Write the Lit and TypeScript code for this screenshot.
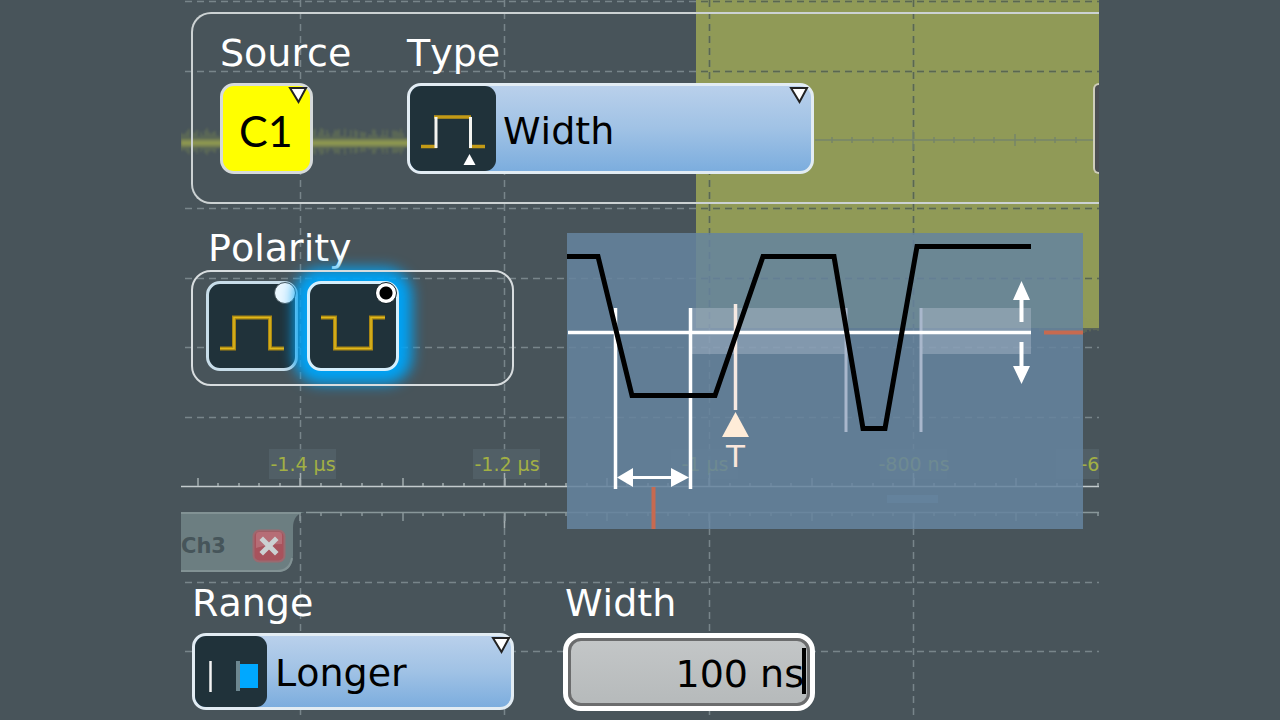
import { LitElement, html, svg, css } from "lit";
import { customElement, state } from "lit/decorators.js";

const verticals = [301, 505, 710, 914];
const horizontals = [1, 71, 208, 278, 347, 417, 582, 651];
const timeLabels = [
  { x: 303, text: "-1.4 µs" },
  { x: 507, text: "-1.2 µs" },
  { x: 705, text: "-1 µs" },
  { x: 914, text: "-800 ns" },
  { x: 1090, text: "-6" },
];

/* Deterministic noise trace around the channel baseline. */
function noise(from: number, to: number, mid: number, amp: number): string {
  let d = "";
  let seed = 7;
  for (let x = from; x < to; x += 2) {
    seed = (seed * 73 + 41) % 997;
    const h = 4 + (seed / 997) * amp;
    d += `M${x} ${mid - h}V${mid + h * 0.8}`;
  }
  return d;
}

/* Ruler ticks: minor every fifth of a major, drawn up or down from the line. */
function ticks(y: number, dir: number): string {
  let d = "";
  for (let i = 0; i < 46; i++) {
    const x = 198 + Math.round(i * 20.45);
    d += `M${x} ${y}v${dir * (i % 5 === 0 ? 8 : 3)}`;
  }
  return d;
}

function axisTicks(): string {
  let d = "";
  for (let i = 0; i < 14; i++) {
    const h = i === 4 ? 10 : i === 9 ? 6 : 3;
    d += `M${832 + Math.round(i * 20.3)} ${140 - h}v${h * 2}`;
  }
  return d;
}

@customElement("scope-backdrop")
export class ScopeBackdrop extends LitElement {
  static styles = css`
    :host { display: block; overflow: hidden; }
    .grid { display: block; width: 100%; height: 100%; }
    .time { font: 19px "DejaVu Sans", Verdana, sans-serif; fill: #a2b044; text-anchor: middle; }
  `;

  render() {
    return html`<svg class="grid" viewBox="181 0 918 720" preserveAspectRatio="xMinYMin slice" aria-hidden="true">
      <defs>
        <clipPath id="lit"><path d="M696 0H1099V328H696Z" /></clipPath>
        <filter id="soft" x="-5%" y="-50%" width="110%" height="200%"><feGaussianBlur stdDeviation="0.9" /></filter>
      </defs>
      <path d="M696 0H1099V328H696Z" fill="#909a57" />
      <path d=${noise(1040, 1099, 326, 5)} stroke="#909a57" stroke-opacity=".5" />
      <g filter="url(#soft)">
        <path d=${noise(181, 697, 143, 11)} stroke="#8d9850" stroke-opacity=".4" stroke-width="1.4" />
        <path d="M181 143H697" stroke="#8d9850" stroke-width="8" stroke-opacity=".6" />
        <path d="M181 143H697" stroke="#a5ae50" stroke-width="3" stroke-opacity=".5" />
      </g>
      <g stroke="#78858a" stroke-width="1.5" stroke-dasharray="7 5" fill="none">
        ${horizontals.map((y) => svg`<path d="M185 ${y + 0.5}H1099" />`)}
        ${verticals.map((x) => svg`<path d="M${x - 0.5} 0V486M${x - 0.5} 516V720" />`)}
      </g>
      <g clip-path="url(#lit)" stroke="#5a674f" stroke-width="1.5" stroke-dasharray="7 5" fill="none">
        ${horizontals.map((y) => svg`<path d="M185 ${y + 0.5}H1099" />`)}
        ${verticals.map((x) => svg`<path d="M${x - 0.5} 0V486" />`)}
      </g>
      <path d="M815 140H1094" stroke="#76856a" stroke-width="1.5" />
      <path d=${axisTicks()} stroke="#76856a" stroke-width="1.5" />
      ${timeLabels.map((t) => svg`
        <rect x=${t.x - 34} y="449" width="67" height="30" fill="#536269" fill-opacity=".85" />
        <text class="time" x=${t.x} y="471">${t.text}</text>`)}
      <path d="M181 486.500H1099" stroke="#c3cbcd" stroke-width="1.6" />
      <path d=${ticks(486, -1)} stroke="#a3adb0" stroke-width="1.5" />
      <path d="M300.500 473V486M504.500 473V486M709.500 473V486M913.500 473V486M504.500 513V528M709.500 513V528M913.500 513V528" stroke="#a3adb0" stroke-width="1.5" />
      <path d="M306 512.500H1099" stroke="#89979a" stroke-width="1.5" />
      <path d=${ticks(513, 1)} stroke="#89979a" stroke-width="1.5" />
      <rect x="887" y="495" width="51" height="8" fill="#6e8fae" fill-opacity=".6" />
    </svg>`;
  }
}

const arrow = html`<svg class="arrow" width="20" height="20" viewBox="0 0 20 20" aria-hidden="true">
  <path d="M2 3H18L10.500 17Z" fill="#fff" stroke="#222" stroke-width="2" /></svg>`;

@customElement("app-root")
export class AppRoot extends LitElement {
  @state() private polarity = "negative";

  static styles = css`
    :host {
      display: block;
      min-height: 100vh;
      background: #48545a;
      color: #fff;
      font: 38px/44px "DejaVu Sans", Verdana, sans-serif;
      font-kerning: none;
    }
    * { box-sizing: border-box; }
    .stage {
      position: relative;
      isolation: isolate;
      max-width: 918px;
      min-height: 100vh;
      margin: 0 auto;
      overflow: hidden;
    }
    .backdrop { position: absolute; inset: 0; z-index: -1; }
    .head {
      display: flex;
      gap: 94px;
      margin: 12px 0 0 10px;
      padding: 17px 0 28px 27px;
      border: 2px solid #ccd2d3;
      border-right: 0;
      border-radius: 20px 0 0 20px;
    }
    .field { display: flex; flex-direction: column; gap: 8px; }
    .name { display: block; height: 44px; white-space: nowrap; }
    .source { width: 93px; }
    .type { flex: 0 1 407px; }
    .more { margin-left: auto; align-self: flex-end; }
    .edge {
      display: block;
      width: 6px;
      height: 91px;
      padding: 0;
      border: 2px solid #cfcdbb;
      border-right: 0;
      border-radius: 12px 0 0 12px;
      background: #4b4d52;
    }
    .drop { display: grid; align-items: center; }
    .drop > * { grid-area: 1 / 1; }
    .pick {
      appearance: none;
      width: 100%;
      height: 91px;
      margin: 0;
      padding: 5px 0 0 93px;
      border: 3px solid #e2ecf3;
      border-radius: 14px;
      background: linear-gradient(#b9d0eb, #a0c2e5 50%, #7cadde);
      color: #000;
      font: inherit;
      outline: 0;
    }
    .short .pick { height: 77px; padding: 3px 0 0 80px; }
    .channel {
      padding: 4px 0 0 16px;
      border-color: #d6dadb;
      background: #ffff00;
      font: 43px/52px Lato, "Open Sans", sans-serif;
    }
    .icon { z-index: 1; margin-left: 3px; border-radius: 11px; background: #20323a; pointer-events: none; }
    .arrow { z-index: 1; align-self: start; justify-self: end; margin: 2px 5px 0 0; pointer-events: none; }
    .short .arrow { margin-right: 3px; }
    .middle { display: flex; align-items: flex-start; margin-bottom: 8px; }
    .left { flex: 0 0 386px; padding-top: 22px; }
    .legend { padding-left: 27px; }
    .group {
      position: relative;
      display: flex;
      gap: 9px;
      width: 323px;
      height: 116px;
      margin-left: 10px;
      padding: 11px 0 0 15px;
    }
    .group::after {
      content: "";
      position: absolute;
      z-index: 2;
      inset: 0;
      border: 2px solid #d8dddf;
      border-radius: 20px;
      pointer-events: none;
    }
    .choice { position: relative; width: 92px; height: 90px; border: 3px solid #c8dde9; border-radius: 14px; background: #20323a; }
    .choice svg { display: block; width: 100%; height: 100%; }
    .on { z-index: 1; border-color: #d5effc; box-shadow: 0 0 14px 13px #00a3f5; }
    .dot {
      appearance: none;
      position: absolute;
      top: -2px;
      right: -1px;
      width: 22px;
      height: 22px;
      margin: 0;
      border: 1px solid #46555c;
      border-radius: 50%;
      background: #eaf7ff;
      outline: 0;
    }
    .dot:checked { border-color: #16242a; background: radial-gradient(circle, #000 6px, #fff 7px); }
    .tab {
      position: relative;
      display: flex;
      align-items: center;
      justify-content: space-between;
      width: 124px;
      height: 61px;
      margin-top: 126px;
      padding: 6px 19px 0 0;
      color: #46555a;
      font: bold 21px/30px "DejaVu Sans", Verdana, sans-serif;
    }
    .shape { position: absolute; inset: 0; z-index: -1; }
    .close { width: 34px; height: 34px; padding: 0; border: 0; background: none; }
    .close svg { display: block; }
    .diagram { flex: 1 1 516px; min-width: 0; margin: 29px 16px 0 0; }
    .diagram svg { display: block; width: 100%; }
    .mark { font: 31px "DejaVu Sans", Verdana, sans-serif; fill: #fae6db; text-anchor: middle; }
    .foot { display: flex; gap: 49px; padding: 0 0 8px 11px; }
    .range { width: 322px; }
    .width { width: 252px; }
    .width .name { padding-left: 2px; }
    .entry { position: relative; height: 78px; border: 5px solid #fff; border-radius: 18px; background: #bbbebf; }
    .value {
      display: block;
      width: 100%;
      height: 68px;
      padding: 4px 3px 0 0;
      border: 3px solid #6b6c6d;
      border-radius: 13px;
      background: linear-gradient(#c3c6c7, #b6babb);
      color: #000;
      font: inherit;
      text-align: right;
      outline: 0;
    }
    .caret { position: absolute; top: 10px; right: 4px; width: 4px; height: 46px; background: #000; }
  `;

  private choose(value: string) {
    this.polarity = value;
  }

  private choice(value: string, label: string, d: string) {
    const on = this.polarity === value;
    return html`<label class=${on ? "choice on" : "choice"}>
      <svg viewBox="0 0 86 84" aria-hidden="true"><path d=${d} fill="none" stroke="#a88612" stroke-width="4" />
        <path d=${d} fill="none" stroke="#e0b81c" stroke-width="1.500" /></svg>
      <input class="dot" type="radio" name="polarity" aria-label=${label} .checked=${on} @change=${() => this.choose(value)} />
    </label>`;
  }

  render() {
    return html`<main class="stage">
      <scope-backdrop class="backdrop"></scope-backdrop>
      <section class="head">
        <div class="field source">
          <label class="name" for="source">Source</label>
          <div class="drop">
            <select class="pick channel" id="source"><option>C1</option></select>
            ${arrow}
          </div>
        </div>
        <div class="field type">
          <label class="name" for="type">Type</label>
          <div class="drop">
            <svg class="icon" width="86" height="85" viewBox="0 0 86 85" aria-hidden="true">
              <path d="M11 60.500H27M24 31H61M59 60.500H75" stroke="#c39a16" stroke-width="3.500" />
              <path d="M26 31V62M60.500 31V62" stroke="#f4f4f0" stroke-width="3" />
              <path d="M59.500 68L65.500 79H53.500Z" fill="#fff" />
            </svg>
            <select class="pick" id="type"><option>Width</option></select>
            ${arrow}
          </div>
        </div>
        <div class="more"><button class="edge" aria-label="More"></button></div>
      </section>

      <section class="middle">
        <div class="left">
          <div class="name legend" id="polarity">Polarity</div>
          <div class="group" role="radiogroup" aria-labelledby="polarity">
            ${this.choice("positive", "Positive", "M11 64.500H25V33.500H61V64.500H75")}
            ${this.choice("negative", "Negative", "M11 33.500H25V64.500H61V33.500H75")}
          </div>
          <div class="tab">
            <svg class="shape" width="124" height="61" viewBox="0 0 124 61" aria-hidden="true">
              <path d="M0 0H124Q112 2 112 16V44Q111 60 96 60H0Z" fill="#6c7e81" />
              <path d="M0 1H120M111 46Q109 59 96 59H0" fill="none" stroke="#829294" stroke-width="2" />
            </svg>
            <span>Ch3</span>
            <button class="close" aria-label="Close Ch3">
              <svg width="34" height="34" viewBox="0 0 34 34">
                <rect x="1.500" y="1.500" width="31" height="31" rx="6" fill="#a8525c" stroke="#9a6a70" stroke-width="2" />
                <path d="M7 3H27Q30 3 30 6V15Q17 15 4 19V6Q4 3 7 3Z" fill="#bf8087" fill-opacity=".6" />
                <path d="M11 11L23 23M23 11L11 23" stroke="#cbd0d2" stroke-width="5" stroke-linecap="square" />
              </svg>
            </button>
          </div>
        </div>
        <div class="diagram">
          <svg viewBox="567 233 516 296" role="img" aria-label="Width trigger diagram">
            <rect x="567" y="233" width="516" height="296" fill="#65849e" fill-opacity=".86" />
            <path d="M691 308H846V354H691ZM920 308H1031V354H920Z" fill="#dfe3f2" fill-opacity=".27" />
            <path d="M846 308V432M921 308V432" stroke="#a9b7cc" stroke-width="3" />
            <path d="M615.500 308V489M690.500 308V489M568 332.500H1031" stroke="#fff" stroke-width="3.500" fill="none" />
            <path d="M735.500 304V410" stroke="#f6e9e2" stroke-width="3.500" />
            <path d="M735.500 412L749 437H722Z" fill="#ffecd8" />
            <text class="mark" x="735.500" y="467">T</text>
            <path d="M567 256.500H598L632 395.500H715L763 256.500H834L863 428.500H885L917 246.500H1031" fill="none" stroke="#000" stroke-width="5" />
            <path d="M632 477.500H674" stroke="#fff" stroke-width="3" />
            <path d="M617 477.500L633 468V487ZM689 477.500L671 468V487Z" fill="#fff" />
            <path d="M1021.500 297V322M1021.500 342V368" stroke="#fff" stroke-width="4" />
            <path d="M1021.500 281L1030 300H1013ZM1021.500 384L1030 366H1013Z" fill="#fff" />
            <path d="M653.500 487V529M1044 332.500H1083" stroke="#c76a50" stroke-width="4" />
          </svg>
        </div>
      </section>

      <section class="foot">
        <div class="field range">
          <label class="name" for="range">Range</label>
          <div class="drop short">
            <svg class="icon" width="72" height="71" viewBox="0 0 72 71" aria-hidden="true">
              <path d="M15.500 25V56" stroke="#f3f3f3" stroke-width="2.500" />
              <path d="M43 25V55" stroke="#6d8790" stroke-width="4" />
              <rect x="45" y="28" width="18" height="24" fill="#00a8ff" />
            </svg>
            <select class="pick" id="range"><option>Longer</option></select>
            ${arrow}
          </div>
        </div>
        <div class="field width">
          <label class="name" for="width">Width</label>
          <div class="entry">
            <input class="value" id="width" type="text" value="100 ns" />
            <span class="caret"></span>
          </div>
        </div>
      </section>
    </main>`;
  }
}
